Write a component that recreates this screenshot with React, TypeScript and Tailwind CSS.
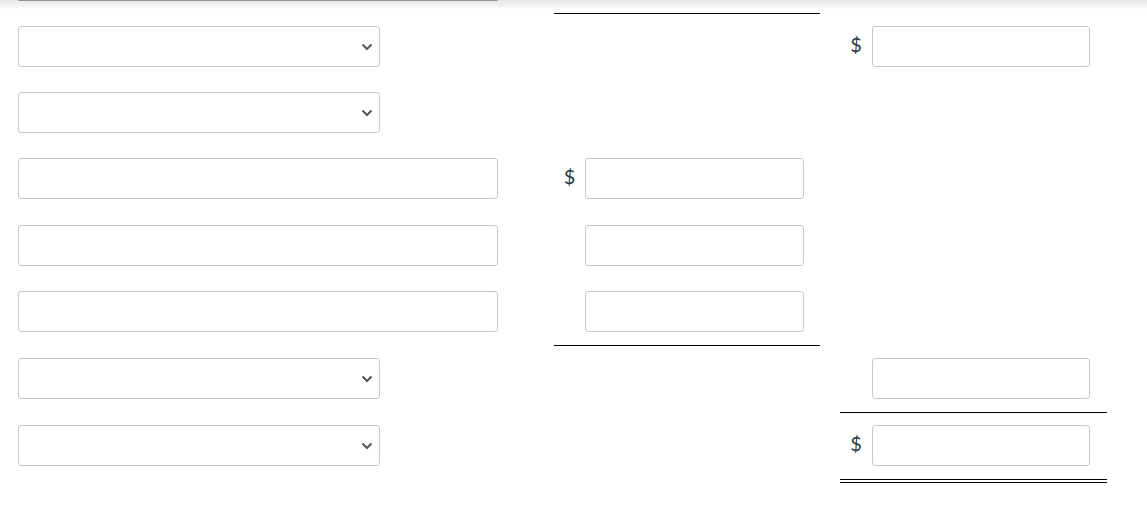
import { ReactNode } from "react";

type Row = {
  h: string;
  left: "select" | "text";
  mid?: "dollar" | "plain";
  right?: "dollar" | "plain";
  midLine?: boolean;
  rightLine?: "single" | "double";
};

const rows: Row[] = [
  { h: "h-[66px]", left: "select", right: "dollar" },
  { h: "h-[66px]", left: "select" },
  { h: "h-[67px]", left: "text", mid: "dollar" },
  { h: "h-[66px]", left: "text", mid: "plain" },
  { h: "h-[67px]", left: "text", mid: "plain", midLine: true },
  { h: "h-[67px]", left: "select", right: "plain", rightLine: "single" },
  { h: "h-[70px]", left: "select", right: "dollar", rightLine: "double" },
];

const boxCls =
  "h-[41px] rounded-[3px] border border-[#c8c8c8] bg-white";

function Chevron() {
  return (
    <svg width="12" height="8" viewBox="0 0 12 8" className="text-[#555]">
      <polyline
        points="1.5,1.5 6,6 10.5,1.5"
        fill="none"
        stroke="currentColor"
        strokeWidth="2"
      />
    </svg>
  );
}

function SelectBox() {
  return (
    <div className={`${boxCls} w-[362px] flex items-center justify-end pr-[6px]`}>
      <Chevron />
    </div>
  );
}

function Amount({
  dollar,
  width,
  inputWidth,
}: {
  dollar: boolean;
  width: string;
  inputWidth: string;
}): ReactNode {
  return (
    <div className="flex items-center">
      <div
        className={`${width} h-[41px] pb-[5px] flex items-center justify-center text-[20px] text-[#2d3b45]`}
      >
        {dollar ? "$" : ""}
      </div>
      <div className={`${boxCls} ${inputWidth}`} />
    </div>
  );
}

export default function App() {
  return (
    <div
      className="relative bg-white min-h-[505px] w-[1147px]"
      style={{ fontFamily: "Lato, 'Liberation Sans', sans-serif" }}
    >
      <div className="pointer-events-none absolute inset-x-0 top-0 h-[10px] bg-gradient-to-b from-black/10 to-transparent" />

      {/* tail of the row above */}
      <div className="flex h-[14px] pl-[18px]">
        <div className="w-[536px]">
          <div className="w-[480px] h-px bg-[#a3a3a3] rounded-b" />
        </div>
        <div className="w-[266px] border-b border-black" />
      </div>

      {rows.map((r, i) => (
        <div key={i} className={`flex pl-[18px] ${r.h}`}>
          <div className="w-[536px] pt-[12px]">
            {r.left === "select" ? (
              <SelectBox />
            ) : (
              <div className={`${boxCls} w-[480px]`} />
            )}
          </div>
          <div
            className={`w-[266px] pt-[12px] ${r.midLine ? "border-b border-black" : ""}`}
          >
            {r.mid && (
              <Amount dollar={r.mid === "dollar"} width="w-[31px]" inputWidth="w-[219px]" />
            )}
          </div>
          <div className="w-[20px]" />
          <div
            className={`w-[267px] pt-[12px] ${
              r.rightLine === "single"
                ? "border-b border-black"
                : r.rightLine === "double"
                ? "border-b-4 border-double border-black"
                : ""
            }`}
          >
            {r.right && (
              <Amount dollar={r.right === "dollar"} width="w-[32px]" inputWidth="w-[218px]" />
            )}
          </div>
        </div>
      ))}
    </div>
  );
}
